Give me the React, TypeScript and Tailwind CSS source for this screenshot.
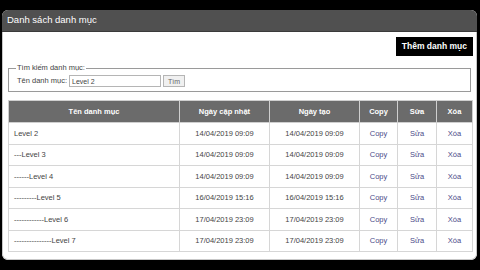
import React from 'react';

interface Category {
  name: string;
  updated: string;
  created: string;
}

const categories: Category[] = [
  { name: 'Level 2', updated: '14/04/2019 09:09', created: '14/04/2019 09:09' },
  { name: '---Level 3', updated: '14/04/2019 09:09', created: '14/04/2019 09:09' },
  { name: '------Level 4', updated: '14/04/2019 09:09', created: '14/04/2019 09:09' },
  { name: '---------Level 5', updated: '16/04/2019 15:16', created: '16/04/2019 15:16' },
  { name: '------------Level 6', updated: '17/04/2019 23:09', created: '17/04/2019 23:09' },
  { name: '---------------Level 7', updated: '17/04/2019 23:09', created: '17/04/2019 23:09' }
];

export default function App() {
  return (
    <div
      className="w-[480px] h-[270px] bg-black pt-[10px] overflow-hidden"
      style={{ fontFamily: '"Liberation Sans", Arial, sans-serif' }}
    >
      <div className="ml-[2px] w-[475px] rounded-[6px] bg-white overflow-hidden">
        {/* Panel header */}
        <div className="h-[22px] bg-[#505050] flex items-center px-[5px] border-b border-[#3a3a3a]">
          <span className="text-white text-[9.5px]">Danh sách danh mục</span>
        </div>

        <div className="border-x border-b border-[#c8c8c8] rounded-b-[6px] px-[4px] pb-[7px]">
          {/* Add button */}
          <div className="flex justify-end pt-[5px]">
            <button className="h-[19px] px-[6px] -mr-[1px] bg-black text-white font-bold text-[8.5px] leading-none">
              Thêm danh mục
            </button>
          </div>

          {/* Search */}
          <fieldset className="mt-[7px] mx-[1px] border border-[#9a9a9a] px-[8px] pb-[4px]">
            <legend className="text-[7.5px] leading-[10px] text-[#444] px-[1px] -ml-[1px]">Tìm kiếm danh mục:</legend>
            <div className="flex items-center gap-[2px] mt-[2px]">
              <label className="text-[7.5px] text-[#444]">Tên danh mục:</label>
              <input
                type="text"
                defaultValue="Level 2"
                className="w-[92px] h-[12px] border border-[#b5b5b5] text-[7px] text-[#444] px-[2px] outline-none"
              />
              <button className="h-[12px] px-[4px] border border-[#b5b5b5] bg-[#f0f0f0] text-[7px] text-[#666] leading-none">
                Tìm
              </button>
            </div>
          </fieldset>

          {/* Table */}
          <table className="mt-[8px] ml-[1px] w-[464px] border-collapse table-fixed text-[7.5px] text-[#444]">
            <colgroup>
              <col className="w-[171px]" />
              <col className="w-[90px]" />
              <col className="w-[90px]" />
              <col className="w-[38px]" />
              <col className="w-[39px]" />
              <col className="w-[36px]" />
            </colgroup>
            <thead>
              <tr className="h-[22px] bg-[#6b6b6b] text-white">
                <th className="border border-[#cfcfcf] font-bold">Tên danh mục</th>
                <th className="border border-[#cfcfcf] font-bold">Ngày cập nhật</th>
                <th className="border border-[#cfcfcf] font-bold">Ngày tạo</th>
                <th className="border border-[#cfcfcf] font-bold">Copy</th>
                <th className="border border-[#cfcfcf] font-bold">Sửa</th>
                <th className="border border-[#cfcfcf] font-bold">Xóa</th>
              </tr>
            </thead>
            <tbody>
              {categories.map((c) => (
                <tr key={c.name} className="h-[21.5px]">
                  <td className="border border-[#d6d6d6] pl-[5px] whitespace-nowrap">{c.name}</td>
                  <td className="border border-[#d6d6d6] text-center">{c.updated}</td>
                  <td className="border border-[#d6d6d6] text-center">{c.created}</td>
                  <td className="border border-[#d6d6d6] text-center text-[#4a4a88]">Copy</td>
                  <td className="border border-[#d6d6d6] text-center text-[#4a4a88]">Sửa</td>
                  <td className="border border-[#d6d6d6] text-center text-[#4a4a88]">Xóa</td>
                </tr>
              ))}
            </tbody>
          </table>
        </div>
      </div>
    </div>
  );
}
